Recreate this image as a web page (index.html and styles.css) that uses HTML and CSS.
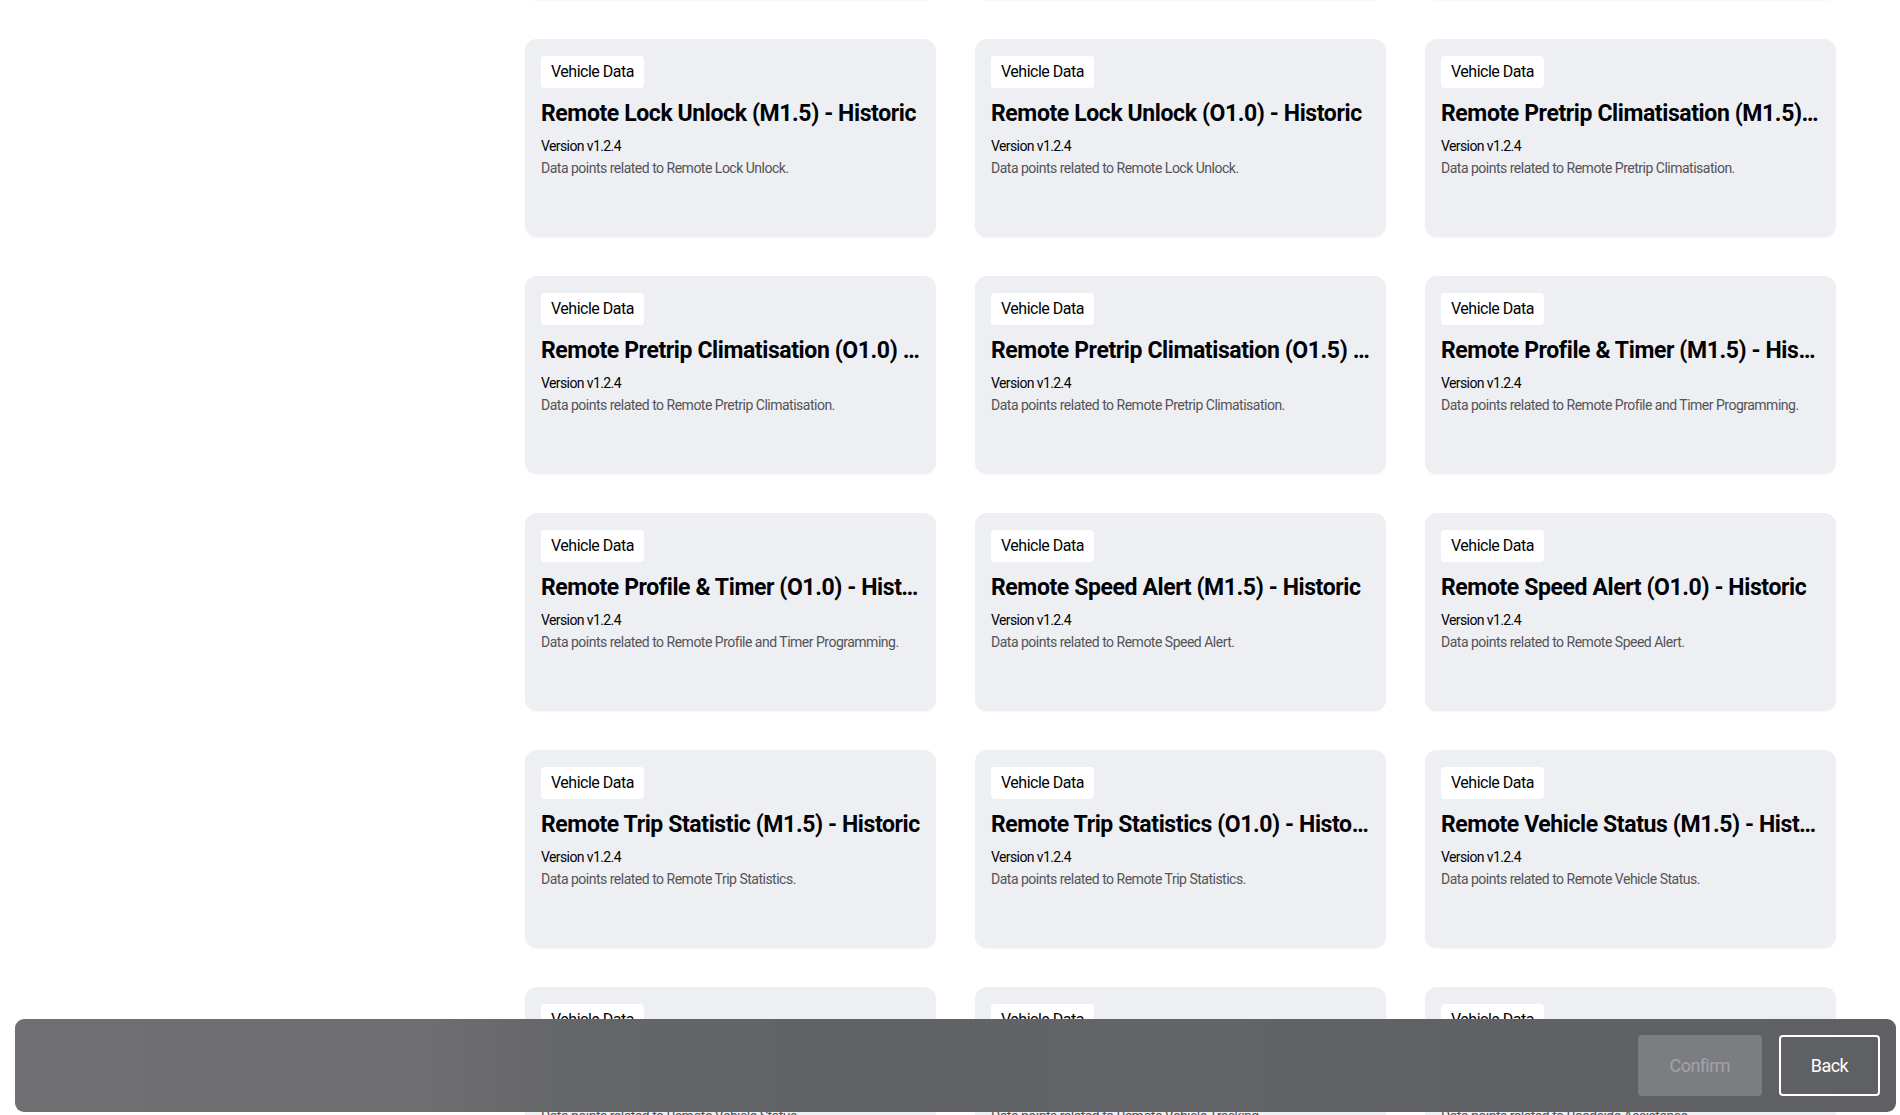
FILE: index.html
```html
<!DOCTYPE html>
<html lang="en">
<head>
<meta charset="utf-8">
<title>Data Packages</title>
<link rel="stylesheet" href="styles.css">
</head>
<body>
<div class="page">
  <aside class="side"></aside>
  <main class="content">
    <div class="grid">
      <article class="card"><span class="badge">Vehicle Data</span><h3 class="title">Remote Honk &amp; Flash (M1.5) - Historic</h3><p class="version">Version v1.2.4</p><p class="desc">Data points related to Remote Honk and Flash.</p></article>
      <article class="card"><span class="badge">Vehicle Data</span><h3 class="title">Remote Honk &amp; Flash (O1.0) - Historic</h3><p class="version">Version v1.2.4</p><p class="desc">Data points related to Remote Honk and Flash.</p></article>
      <article class="card"><span class="badge">Vehicle Data</span><h3 class="title">Remote Lock Unlock (E3) - Historic</h3><p class="version">Version v1.2.4</p><p class="desc">Data points related to Remote Lock Unlock.</p></article>

      <article class="card"><span class="badge">Vehicle Data</span><h3 class="title">Remote Lock Unlock (M1.5) - Historic</h3><p class="version">Version v1.2.4</p><p class="desc">Data points related to Remote Lock Unlock.</p></article>
      <article class="card"><span class="badge">Vehicle Data</span><h3 class="title">Remote Lock Unlock (O1.0) - Historic</h3><p class="version">Version v1.2.4</p><p class="desc">Data points related to Remote Lock Unlock.</p></article>
      <article class="card"><span class="badge">Vehicle Data</span><h3 class="title">Remote Pretrip Climatisation (M1.5) - Historic</h3><p class="version">Version v1.2.4</p><p class="desc">Data points related to Remote Pretrip Climatisation.</p></article>

      <article class="card"><span class="badge">Vehicle Data</span><h3 class="title">Remote Pretrip Climatisation (O1.0) - Historic</h3><p class="version">Version v1.2.4</p><p class="desc">Data points related to Remote Pretrip Climatisation.</p></article>
      <article class="card"><span class="badge">Vehicle Data</span><h3 class="title">Remote Pretrip Climatisation (O1.5) - Historic</h3><p class="version">Version v1.2.4</p><p class="desc">Data points related to Remote Pretrip Climatisation.</p></article>
      <article class="card"><span class="badge">Vehicle Data</span><h3 class="title">Remote Profile &amp; Timer (M1.5) - Historic</h3><p class="version">Version v1.2.4</p><p class="desc">Data points related to Remote Profile and Timer Programming.</p></article>

      <article class="card"><span class="badge">Vehicle Data</span><h3 class="title">Remote Profile &amp; Timer (O1.0) - Historic</h3><p class="version">Version v1.2.4</p><p class="desc">Data points related to Remote Profile and Timer Programming.</p></article>
      <article class="card"><span class="badge">Vehicle Data</span><h3 class="title">Remote Speed Alert (M1.5) - Historic</h3><p class="version">Version v1.2.4</p><p class="desc">Data points related to Remote Speed Alert.</p></article>
      <article class="card"><span class="badge">Vehicle Data</span><h3 class="title">Remote Speed Alert (O1.0) - Historic</h3><p class="version">Version v1.2.4</p><p class="desc">Data points related to Remote Speed Alert.</p></article>

      <article class="card"><span class="badge">Vehicle Data</span><h3 class="title">Remote Trip Statistic (M1.5) - Historic</h3><p class="version">Version v1.2.4</p><p class="desc">Data points related to Remote Trip Statistics.</p></article>
      <article class="card"><span class="badge">Vehicle Data</span><h3 class="title">Remote Trip Statistics (O1.0) - Historic</h3><p class="version">Version v1.2.4</p><p class="desc">Data points related to Remote Trip Statistics.</p></article>
      <article class="card"><span class="badge">Vehicle Data</span><h3 class="title">Remote Vehicle Status (M1.5) - Historic</h3><p class="version">Version v1.2.4</p><p class="desc">Data points related to Remote Vehicle Status.</p></article>

      <article class="card"><span class="badge">Vehicle Data</span><h3 class="title">Remote Vehicle Status (O1.0) - Historic</h3><p class="version">Version v1.2.4</p><p class="desc">Data points related to Remote Vehicle Status.</p></article>
      <article class="card"><span class="badge">Vehicle Data</span><h3 class="title">Remote Vehicle Tracking (M1.5) - Historic</h3><p class="version">Version v1.2.4</p><p class="desc">Data points related to Remote Vehicle Tracking.</p></article>
      <article class="card"><span class="badge">Vehicle Data</span><h3 class="title">Roadside Assistance (M1.5) - Historic</h3><p class="version">Version v1.2.4</p><p class="desc">Data points related to Roadside Assistance.</p></article>
    </div>
  </main>
</div>

<div class="action-bar">
  <button class="btn btn-confirm" disabled>Confirm</button>
  <button class="btn btn-back">Back</button>
</div>
</body>
</html>
```
FILE: styles.css
```css
* { box-sizing: border-box; }

html, body {
  margin: 0;
  padding: 0;
  background: #ffffff;
  height: 100%;
  overflow: hidden;
}

body {
  font-family: Roboto, "Liberation Sans", Arial, sans-serif;
  color: #010205;
}

.page {
  display: grid;
  grid-template-columns: 525px 1fr;
}

.side { min-height: 1px; }

.grid {
  display: grid;
  grid-template-columns: repeat(3, 411px);
  column-gap: 39px;
  row-gap: 39px;
  margin-top: -198px;
}

.card {
  height: 198px;
  background: #eeeff2;
  border-radius: 12px;
  padding: 17px 16px;
  display: flex;
  flex-direction: column;
  align-items: flex-start;
  box-shadow: 0 1px 2px rgba(0, 0, 0, 0.04);
  min-width: 0;
}

.badge {
  display: inline-block;
  height: 32px;
  line-height: 32px;
  padding: 0 10px;
  background: #ffffff;
  border-radius: 4px;
  font-size: 16px;
  letter-spacing: -0.5px;
  color: #010205;
}

.title {
  margin: 10px 0 0;
  width: 100%;
  font-size: 23px;
  line-height: 32px;
  font-weight: 700;
  letter-spacing: -0.4px;
  white-space: nowrap;
  overflow: hidden;
  text-overflow: ellipsis;
  color: #010205;
}

.version {
  margin: 6px 0 0;
  font-size: 14px;
  line-height: 20px;
  letter-spacing: -0.6px;
  color: #010205;
}

.desc {
  margin: 2px 0 0;
  font-size: 14px;
  line-height: 20px;
  letter-spacing: -0.5px;
  color: #535457;
}

.action-bar {
  position: fixed;
  left: 15px;
  right: 4px;
  bottom: 3px;
  height: 93px;
  padding: 16px;
  border-radius: 9px;
  background: linear-gradient(90deg, #707072 0%, #6e6e70 22%, #656668 29%, #616265 45%, #636467 62%, #606164 78%, #5f6063 100%);
  display: flex;
  justify-content: flex-end;
  align-items: center;
  gap: 17px;
}

.btn {
  height: 61px;
  padding: 0 30px;
  border-radius: 4px;
  border: 2px solid transparent;
  font-family: Roboto, "Liberation Sans", Arial, sans-serif;
  font-size: 18px;
  letter-spacing: -0.6px;
  background: transparent;
  cursor: pointer;
}

.btn-confirm {
  background: #7c7d81;
  border-color: #7c7d81;
  color: #a2a3a7;
  cursor: default;
}

.btn-back {
  border-color: #ffffff;
  color: #ffffff;
}
```
